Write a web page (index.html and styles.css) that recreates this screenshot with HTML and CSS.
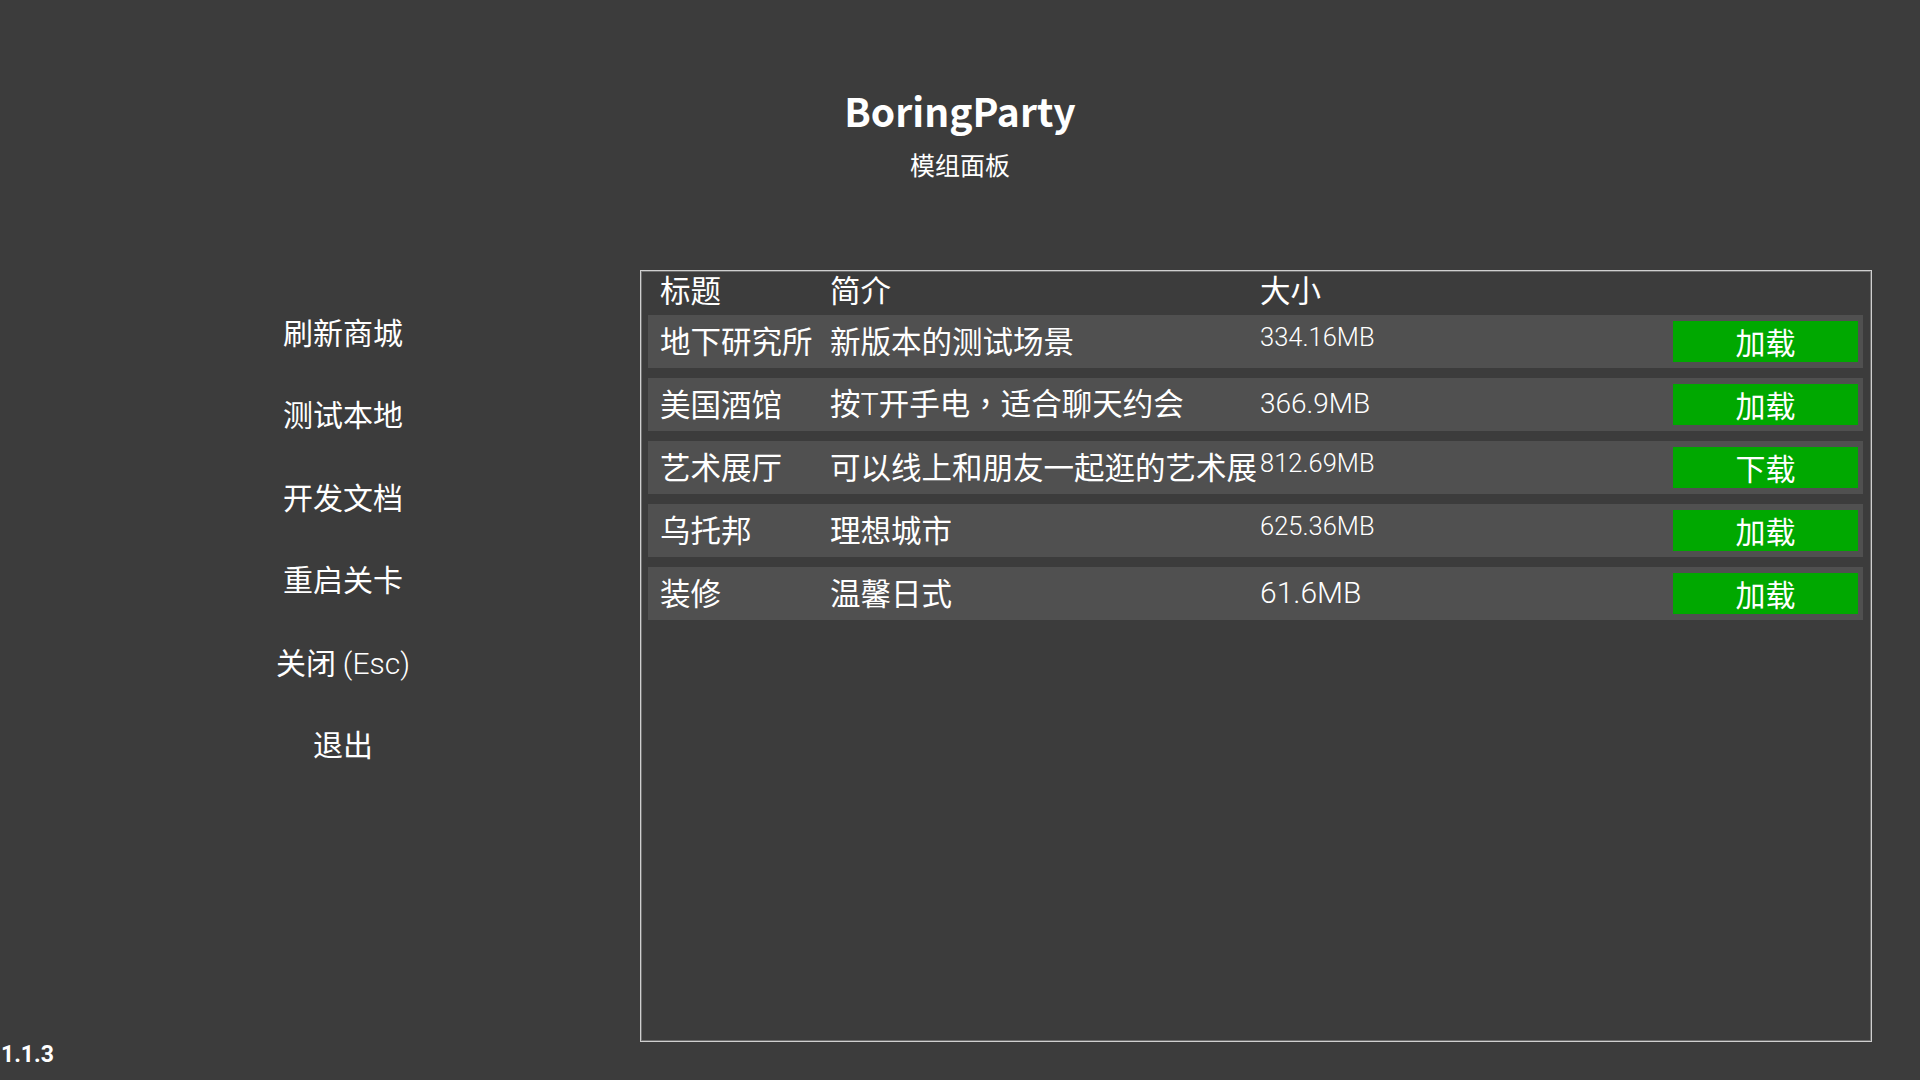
FILE: index.html
```html
<!DOCTYPE html>
<html lang="zh-CN">
<head>
<meta charset="utf-8">
<title>BoringParty 模组面板</title>
<link rel="stylesheet" href="styles.css">
</head>
<body>
<div class="app">
  <header class="header">
    <h1 class="title">BoringParty</h1>
    <div class="subtitle">模组面板</div>
  </header>
  <div class="main">
    <nav class="sidebar">
      <div class="menu-item">刷新商城</div>
      <div class="menu-item">测试本地</div>
      <div class="menu-item">开发文档</div>
      <div class="menu-item">重启关卡</div>
      <div class="menu-item">关闭 <span class="lat">(Esc)</span></div>
      <div class="menu-item">退出</div>
    </nav>
    <section class="panel">
      <div class="table-head">
        <div class="cell">标题</div>
        <div class="cell">简介</div>
        <div class="cell">大小</div>
        <div class="cell"></div>
      </div>
      <div class="rows">
        <div class="row">
          <div class="cell">地下研究所</div>
          <div class="cell">新版本的测试场景</div>
          <div class="cell size s26">334.16MB</div>
          <div class="btn">加载</div>
        </div>
        <div class="row">
          <div class="cell">美国酒馆</div>
          <div class="cell">按<span class="lat">T</span>开手电<span class="tc" lang="zh-TW">，</span>适合聊天约会</div>
          <div class="cell size s28">366.9MB</div>
          <div class="btn">加载</div>
        </div>
        <div class="row">
          <div class="cell">艺术展厅</div>
          <div class="cell">可以线上和朋友一起逛的艺术展</div>
          <div class="cell size s26">812.69MB</div>
          <div class="btn">下载</div>
        </div>
        <div class="row">
          <div class="cell">乌托邦</div>
          <div class="cell">理想城市</div>
          <div class="cell size s26">625.36MB</div>
          <div class="btn">加载</div>
        </div>
        <div class="row">
          <div class="cell">装修</div>
          <div class="cell">温馨日式</div>
          <div class="cell size s30">61.6MB</div>
          <div class="btn">加载</div>
        </div>
      </div>
    </section>
  </div>
  <div class="version">1.1.3</div>
</div>
</body>
</html>
```

FILE: styles.css
```css
html, body {
  margin: 0;
  padding: 0;
  background: #3c3c3c;
}

.app {
  position: relative;
  width: 1920px;
  height: 1080px;
  overflow: hidden;
  background: #3c3c3c;
  color: #ffffff;
  font-family: "Noto Sans CJK SC", "Noto Sans", sans-serif;
}

.header {
  box-sizing: border-box;
  height: 270px;
  padding-top: 85px;
  text-align: center;
}

.title {
  margin: 0;
  font-size: 39px;
  line-height: 50px;
  font-weight: 700;
}

.subtitle {
  margin-top: 12px;
  font-size: 25px;
  line-height: 34px;
}

.main {
  display: flex;
}

.sidebar {
  flex: none;
  box-sizing: border-box;
  width: 640px;
  padding-left: 46px;
  padding-top: 19.5px;
  display: flex;
  flex-direction: column;
}

.menu-item {
  height: 82.6px;
  line-height: 82.6px;
  font-size: 30px;
  text-align: center;
}

.lat {
  font-family: Roboto, "Noto Sans CJK SC", sans-serif;
  font-weight: 300;
}

.tc {
  font-family: "Noto Sans CJK TC", "Noto Sans CJK SC", sans-serif;
}

.panel {
  flex: none;
  box-sizing: border-box;
  width: 1232px;
  height: 772px;
  border: 1px solid #cfcfcf;
  box-shadow: inset 0 0 0 1px #6e6e6e;
  padding: 0 8px 0 7px;
}

.table-head,
.row {
  display: grid;
  grid-template-columns: 170px 430px 1fr 185px;
  align-items: center;
  padding-left: 12px;
  padding-right: 5px;
}

.table-head {
  height: 44px;
  font-size: 30.5px;
}

.table-head .cell {
  line-height: 36px;
  padding-bottom: 8px;
}

.rows {
  display: flex;
  flex-direction: column;
  gap: 10px;
}

.row {
  height: 53px;
  background: #505050;
  font-size: 30.5px;
}

.cell {
  white-space: nowrap;
  line-height: 44px;
  padding-bottom: 3px;
}

.size {
  font-family: Roboto, sans-serif;
  font-weight: 300;
}

.s26 { font-size: 25.5px; padding-bottom: 9px; }
.s28 { font-size: 28px; padding-bottom: 2px; }
.s30 { font-size: 30px; padding-bottom: 1px; }

.btn {
  height: 41px;
  line-height: 41px;
  background: #00a800;
  color: #ffffff;
  text-align: center;
  font-size: 30px;
}

.version {
  position: absolute;
  left: 1px;
  bottom: 11px;
  font-family: Roboto, "Noto Sans", sans-serif;
  font-size: 23px;
  line-height: 28px;
  font-weight: 700;
}
```
